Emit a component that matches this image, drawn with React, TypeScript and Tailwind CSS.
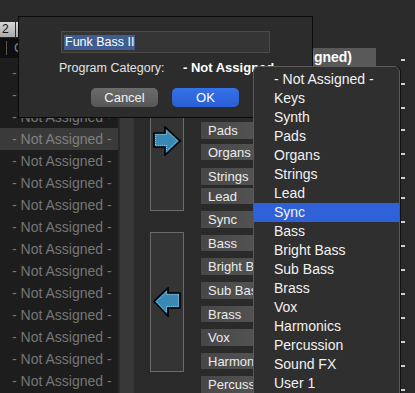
import React from "react";

const menu = [
  "- Not Assigned -",
  "Keys",
  "Synth",
  "Pads",
  "Organs",
  "Strings",
  "Lead",
  "Sync",
  "Bass",
  "Bright Bass",
  "Sub Bass",
  "Brass",
  "Vox",
  "Harmonics",
  "Percussion",
  "Sound FX",
  "User 1",
];

const buttons: [string, string][] = [
  ["Pads", "mt-[55px]"],
  ["Organs", "mt-[5px]"],
  ["Strings", "mt-[8px]"],
  ["Lead", "mt-[3px]"],
  ["Sync", "mt-[7px]"],
  ["Bass", "mt-[7px]"],
  ["Bright Bass", "mt-[7px]"],
  ["Sub Bass", "mt-[7px]"],
  ["Brass", "mt-[7px]"],
  ["Vox", "mt-[7px]"],
  ["Harmonics", "mt-[7px]"],
  ["Percussion", "mt-[7px]"],
];

const dashes = [
  "mt-[59px]",
  "mt-[22px]",
  "mt-[22px]",
  "mt-[20px]",
  "mt-[22px]",
  "mt-[22px]",
  "mt-[18px]",
  "mt-[22px]",
  "mt-[22px]",
  "mt-[22px]",
  "mt-[22px]",
  "mt-[22px]",
  "mt-[22px]",
  "mt-[22px]",
  "mt-[22px]",
];

function RightArrow() {
  return (
    <svg width="28" height="30" viewBox="0 0 28 30">
      <polygon
        points="1,7 12,7 12,1 27,15 12,29 12,21 1,21"
        fill="#3a88b6"
        stroke="#000"
        strokeWidth="1.6"
        strokeLinejoin="miter"
      />
      <polygon
        points="2.6,8.6 13.6,8.6 13.6,4.8 24.6,15 13.6,25.2 13.6,19.4 2.6,19.4"
        fill="none"
        stroke="#e8f2f8"
        strokeWidth="0.6"
        strokeDasharray="1 1"
      />
    </svg>
  );
}

function LeftArrow() {
  return (
    <svg width="28" height="30" viewBox="0 0 28 30">
      <polygon
        points="27,6 15,6 15,1 1,14.5 15,29 15,21 27,21"
        fill="#3a88b6"
        stroke="#000"
        strokeWidth="1.6"
        strokeLinejoin="miter"
      />
      <polygon
        points="25.4,7.6 13.4,7.6 13.4,4.8 3.4,14.5 13.4,25.2 13.4,19.4 25.4,19.4"
        fill="none"
        stroke="#e8f2f8"
        strokeWidth="0.6"
        strokeDasharray="1 1"
      />
    </svg>
  );
}

export default function App() {
  return (
    <div
      className="relative w-[415px] h-[393px] overflow-hidden bg-[#2a2a2a] flex"
      style={{ fontFamily: '"Liberation Sans", Arial, sans-serif' }}
    >
      {/* Left list column */}
      <div className="w-[118px] flex flex-col pt-[22px] shrink-0">
        <div className="h-[16px] flex">
          <div className="w-[15px] h-[15px] bg-gradient-to-b from-[#d6d6d6] to-[#a9a9a9] text-[12px] leading-[15px] text-[#111] pl-[2px]">
            2
          </div>
          <div className="w-[1px]" />
          <div className="w-[30px] h-[15px] bg-gradient-to-b from-[#d6d6d6] to-[#a9a9a9]" />
        </div>
        <div className="h-[20px] bg-[#0e0e0e] flex items-center">
          <div className="ml-[6px] w-[1px] h-[14px] bg-[#555]" />
          <span className="ml-[7px] text-[13px] text-[#888]">Category</span>
        </div>
        <div className="flex-1 bg-[#1d1d1d] pt-[4px]">
          {Array.from({ length: 15 }).map((_, i) => (
            <div
              key={i}
              className={
                "h-[22px] leading-[22px] pl-[12px] text-[14px] text-[#767676] whitespace-nowrap " +
                (i === 3 ? "bg-[#3a3a3a] text-[#808080]" : "")
              }
            >
              - Not Assigned -
            </div>
          ))}
        </div>
      </div>
      <div className="w-[2px] shrink-0" />
      <div className="w-[14px] shrink-0 mt-[38px] bg-[#383838]" />

      {/* Panels with arrows */}
      <div className="ml-[16px] w-[34px] shrink-0 flex flex-col pt-[100px]">
        <div className="h-[111px] border border-[#6a6a6a] bg-[#343434] flex flex-col pl-[2px] pt-[25px]">
          <RightArrow />
        </div>
        <div className="mt-[21px] h-[140px] border border-[#6a6a6a] bg-[#343434] flex flex-col pl-[2px] pt-[54px]">
          <LeftArrow />
        </div>
      </div>

      {/* Category buttons column */}
      <div className="ml-[17px] w-[200px] shrink-0 flex flex-col pt-[48px]">
        <div className="h-[19px] w-[175px] bg-[#595959] flex items-center justify-end pr-[24px] text-[14px] font-bold text-white whitespace-nowrap">
          Category (Not Assigned)
        </div>
        {buttons.map(([label, mt]) => (
          <div
            key={label}
            className={
              mt +
              " h-[17px] w-[90px] bg-gradient-to-r from-[#474747] to-[#5a5a5a] text-[13px] leading-[17px] text-[#ececec] pl-[7px] whitespace-nowrap overflow-hidden"
            }
          >
            {label}
          </div>
        ))}
      </div>

      {/* Right dashes */}
      <div className="flex flex-col shrink-0">
        {dashes.map((mt, i) => (
          <div key={i} className={mt + " w-[4px] h-[2px] bg-[#cfcfcf]"} />
        ))}
      </div>

      {/* Dialog */}
      <div className="absolute left-[18px] top-[16px] w-[295px] h-[102px] bg-[#2c2c2c] border border-[#0a0a0a] flex flex-col pt-[14px] pl-[42px]">
        <div className="w-[209px] h-[22px] bg-[#353535] border border-[#4a4a4a] flex items-center pl-[2px]">
          <span className="bg-[#3f5e8f] text-white text-[12.5px] leading-[15px] px-[1px]">
            Funk Bass II
          </span>
        </div>
        <div className="mt-[7px] ml-[-2px] flex items-center h-[16px] whitespace-nowrap">
          <span className="w-[124px] text-[12.5px] text-[#e2e2e2]">Program Category:</span>
          <span className="text-[13px] font-bold text-white">- Not Assigned -</span>
        </div>
        <div className="mt-[12px] ml-[30px] flex gap-[14px]">
          <div className="w-[67px] h-[19px] rounded-[5px] bg-gradient-to-b from-[#6b6b6b] to-[#585858] text-[13px] leading-[19px] text-center text-[#f2f2f2]">
            Cancel
          </div>
          <div className="w-[67px] h-[19px] rounded-[5px] bg-gradient-to-b from-[#3571e6] to-[#2a5fd6] text-[13px] leading-[19px] text-center text-white">
            OK
          </div>
        </div>
      </div>

      {/* Popup menu */}
      <div className="absolute left-[253px] top-[66px] w-[147px] h-[340px] rounded-t-[6px] border border-[#5a5a5a] bg-[#2f2f2f] pt-[3px] shadow-[1px_0_0_#111]">
        {menu.map((m) => (
          <div
            key={m}
            className={
              "h-[19px] leading-[19px] pl-[20px] text-[14px] text-[#f2f2f2] whitespace-nowrap " +
              (m === "Sync" ? "bg-[#2f62d9]" : "")
            }
          >
            {m}
          </div>
        ))}
      </div>
    </div>
  );
}
